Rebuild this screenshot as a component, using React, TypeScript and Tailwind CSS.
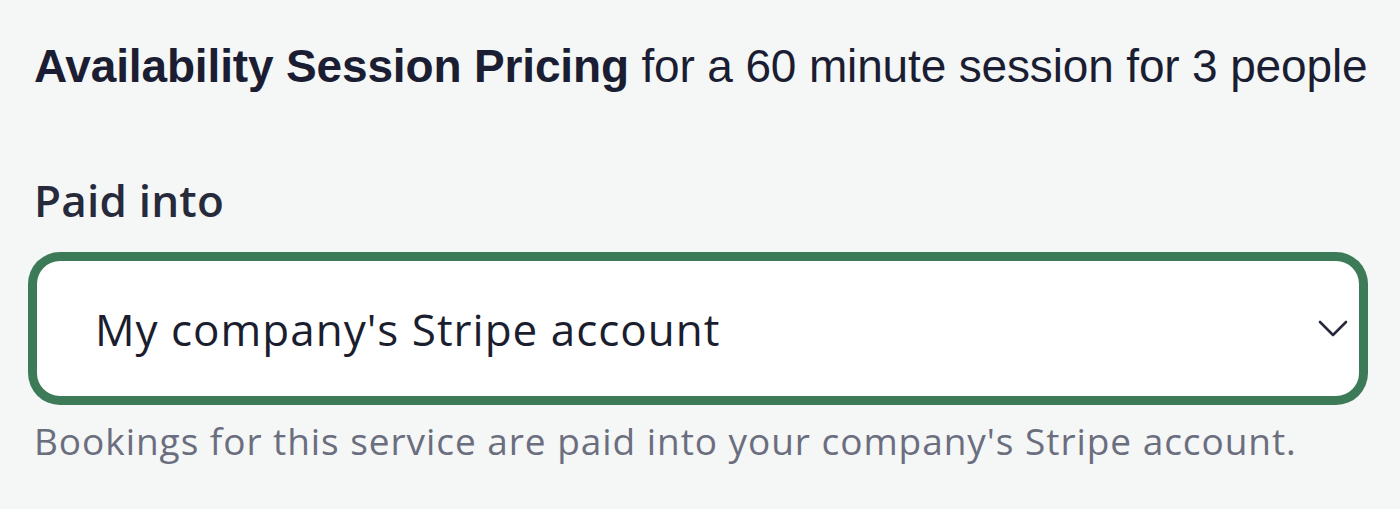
export default function App() {
  return (
    <div className="min-h-[509px] w-[1400px] bg-[#f5f6f6] pl-[34px] pr-[30px] pt-[39px]">
      {/* Title */}
      <h2 className="whitespace-nowrap text-[46px] leading-[54px] tracking-[-0.15px] text-[#1b1e32]" style={{ fontFamily: '"Liberation Sans", Arial, sans-serif' }}>
        <span className="font-bold">Availability Session Pricing</span> for a 60 minute session for 3 people
      </h2>

      <div className="mt-[81px] mr-[8px]" style={{ fontFamily: '"Open Sans", Lato, sans-serif' }}>
        <label className="block text-[44px] font-semibold leading-[52px] tracking-[0.2px] text-[#262a3b]">Paid into</label>

        {/* Select */}
        <div className="mt-[32px] flex h-[141px] items-center justify-between rounded-[26px] border-[3px] border-[#3d7b58] bg-white pl-[58px] pr-[11px] ring-[6px] ring-[#3d7b58]">
          <span className="text-[44px] tracking-[1px] text-[#1b1e2e]">My company's Stripe account</span>
          <svg width="30" height="18" viewBox="0 0 30 18" fill="none" className="text-[#262a3b]">
            <polyline points="2,2 15,15 28,2" stroke="currentColor" strokeWidth="2.6" strokeLinecap="round" strokeLinejoin="round" />
          </svg>
        </div>

        <p className="mt-[20px] whitespace-nowrap text-[37px] leading-[44px] tracking-[0.95px] text-[#6b6e7e]">
          Bookings for this service are paid into your company's Stripe account.
        </p>
      </div>
    </div>
  )
}
